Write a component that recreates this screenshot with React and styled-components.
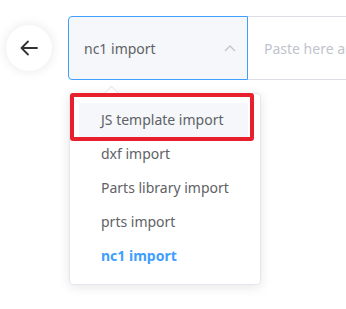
import React from "react";
import styled, { createGlobalStyle } from "styled-components";

const GlobalStyle = createGlobalStyle`
  html, body {
    margin: 0;
    padding: 0;
    background: #ffffff;
    font-family: "Noto Sans", "Liberation Sans", sans-serif;
  }
`;

const options = [
  { id: 1, label: "JS template import" },
  { id: 2, label: "dxf import" },
  { id: 3, label: "Parts library import" },
  { id: 4, label: "prts import" },
  { id: 5, label: "nc1 import" },
];

const App = () => {
  const selected = 5;
  const hovered = 1;
  return (
    <>
      <GlobalStyle />
      <Page>
        <TopBar>
          <BackButton aria-label="back">
            <svg width="20" height="20" viewBox="0 0 20 20" fill="none">
              <path
                d="M18 10H3M9 3.5L2.5 10L9 16.5"
                stroke="#303133"
                strokeWidth="1.8"
                strokeLinecap="round"
                strokeLinejoin="round"
              />
            </svg>
          </BackButton>
          <SelectWrap>
            <SelectBox>
              <SelectValue>nc1 import</SelectValue>
              <svg width="12" height="8" viewBox="0 0 12 8" fill="none">
                <path d="M1 7L6 2L11 7" stroke="#c0c4cc" strokeWidth="1.3" />
              </svg>
            </SelectBox>
            <Dropdown>
              <Caret />
              <OptionList>
                {options.map((opt) => (
                  <OptionItem
                    key={opt.id}
                    $active={opt.id === selected}
                    $hover={opt.id === hovered}
                  >
                    {opt.label}
                  </OptionItem>
                ))}
              </OptionList>
              <Marker />
            </Dropdown>
          </SelectWrap>
          <PasteInput placeholder="Paste here and import" />
        </TopBar>
      </Page>
    </>
  );
};

export default App;

const Page = styled.div`
  width: 346px;
  height: 309px;
  overflow: hidden;
  position: relative;
`;

const TopBar = styled.div`
  display: flex;
  align-items: center;
  padding: 16px 0 0 6px;
`;

const BackButton = styled.button`
  width: 46px;
  height: 46px;
  border-radius: 50%;
  border: none;
  background: #ffffff;
  box-shadow: 0 0 12px rgba(0, 0, 0, 0.1);
  display: flex;
  align-items: center;
  justify-content: center;
  padding: 0;
  margin-right: 16px;
  flex-shrink: 0;
`;

const SelectWrap = styled.div`
  position: relative;
  flex-shrink: 0;
`;

const SelectBox = styled.div`
  box-sizing: border-box;
  width: 180px;
  height: 64px;
  border: 1px solid #409eff;
  border-radius: 4px 0 0 4px;
  background: #f5f7fa;
  display: flex;
  align-items: center;
  justify-content: space-between;
  padding: 0 11px 0 15px;
`;

const SelectValue = styled.span`
  font-size: 14px;
  color: #606266;
`;

const PasteInput = styled.input`
  box-sizing: border-box;
  width: 220px;
  height: 64px;
  flex-shrink: 0;
  border: 1px solid #dcdfe6;
  border-left: none;
  outline: none;
  padding: 0 16px;
  font-family: inherit;
  font-size: 14px;
  color: #606266;
  background: #ffffff;

  &::placeholder {
    color: #c0c4cc;
  }
`;

const Dropdown = styled.div`
  position: absolute;
  top: 77px;
  left: 1px;
  width: 192px;
  box-sizing: border-box;
  background: #ffffff;
  border: 1px solid #e4e7ed;
  border-radius: 4px;
  box-shadow: 0 2px 12px rgba(0, 0, 0, 0.1);
  z-index: 10;
`;

const Caret = styled.div`
  position: absolute;
  top: -6px;
  left: 36px;
  width: 10px;
  height: 10px;
  background: #ffffff;
  border-top: 1px solid #e4e7ed;
  border-left: 1px solid #e4e7ed;
  transform: rotate(45deg);
`;

const OptionList = styled.ul`
  list-style: none;
  margin: 0;
  padding: 9px 0 11px;
  position: relative;
`;

const OptionItem = styled.li`
  height: 34px;
  line-height: 34px;
  font-size: 14px;
  padding-left: ${(p) => (p.$hover ? "22px" : "31px")};
  margin: ${(p) => (p.$hover ? "0 12px 0 9px" : "0")};
  color: ${(p) => (p.$active ? "#409eff" : "#606266")};
  font-weight: ${(p) => (p.$active ? 700 : 400)};
  background: ${(p) => (p.$hover ? "#f5f7fa" : "transparent")};
  white-space: nowrap;
`;

const Marker = styled.div`
  position: absolute;
  top: -1px;
  left: 0px;
  width: 184px;
  height: 48px;
  box-sizing: border-box;
  border: 4px solid #e8202e;
  border-radius: 3px;
  pointer-events: none;
`;
